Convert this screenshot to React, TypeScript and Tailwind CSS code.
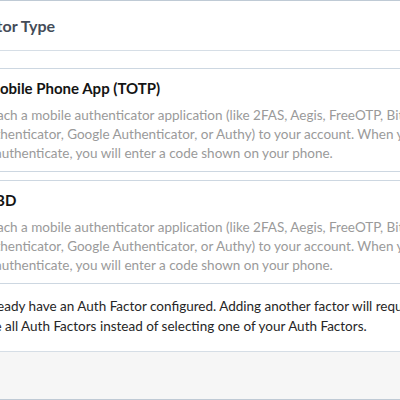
import { useState } from "react";

type Factor = {
  id: string;
  title: string;
  lines: string[];
};

const factors: Factor[] = [
  {
    id: "totp",
    title: "Mobile Phone App (TOTP)",
    lines: [
      "Attach a mobile authenticator application (like 2FAS, Aegis, FreeOTP, Bitwarden",
      "Authenticator, Google Authenticator, or Authy) to your account. When you want",
      "to authenticate, you will enter a code shown on your phone.",
    ],
  },
  {
    id: "tbd",
    title: "TBD",
    lines: [
      "Attach a mobile authenticator application (like 2FAS, Aegis, FreeOTP, Bitwarden",
      "Authenticator, Google Authenticator, or Authy) to your account. When you want",
      "to authenticate, you will enter a code shown on your phone.",
    ],
  },
];

export default function App() {
  const [selected, setSelected] = useState<string | null>(null);

  return (
    <div className="w-[400px] h-[400px] overflow-hidden bg-white font-['Lato',sans-serif]">
      <div className="-ml-[71px] w-[640px] border-t border-b border-[#bfcad5] bg-white">
        <div className="flex h-[50px] items-center border-b border-[#d6dee6] pl-[5px] pr-4">
          <h2 className="text-[16px] font-bold text-[#444c58]">Auth Factor Type</h2>
        </div>

        <div className="px-4 pt-[17px] pb-[15px]">
          <div className="flex flex-col gap-2">
            {factors.map((f) => (
              <label
                key={f.id}
                className="flex cursor-pointer gap-3 border border-[#cdd7e1] px-3 py-2"
              >
                <input
                  type="radio"
                  name="factor"
                  checked={selected === f.id}
                  onChange={() => setSelected(f.id)}
                  className="mt-[4px] h-4 w-4 shrink-0"
                />
                <div className="flex flex-col gap-[7px]">
                  <div className="text-[15px] font-bold leading-[22px] text-[#141414]">{f.title}</div>
                  <p className="-ml-[7px] whitespace-nowrap text-[13.5px] leading-[19px] text-[#9a9a9a]">
                    {f.lines.map((l, i) => (
                      <span key={i}>
                        {l}
                        {i < f.lines.length - 1 && <br />}
                      </span>
                    ))}
                  </p>
                </div>
              </label>
            ))}
          </div>

          <p className="mt-[12px] whitespace-nowrap px-3 text-[13.5px] leading-[20px] text-[#262626]">
            You already have an Auth Factor configured. Adding another factor will require you to
            <br />
            provide all Auth Factors instead of selecting one of your Auth Factors.
          </p>
        </div>

        <div className="flex h-[48px] items-center justify-end gap-2 border-t border-[#d6dee6] bg-[#f6f6f6] px-4">
          <button className="text-[13px] text-[#555]">Cancel</button>
        </div>
      </div>
    </div>
  );
}
